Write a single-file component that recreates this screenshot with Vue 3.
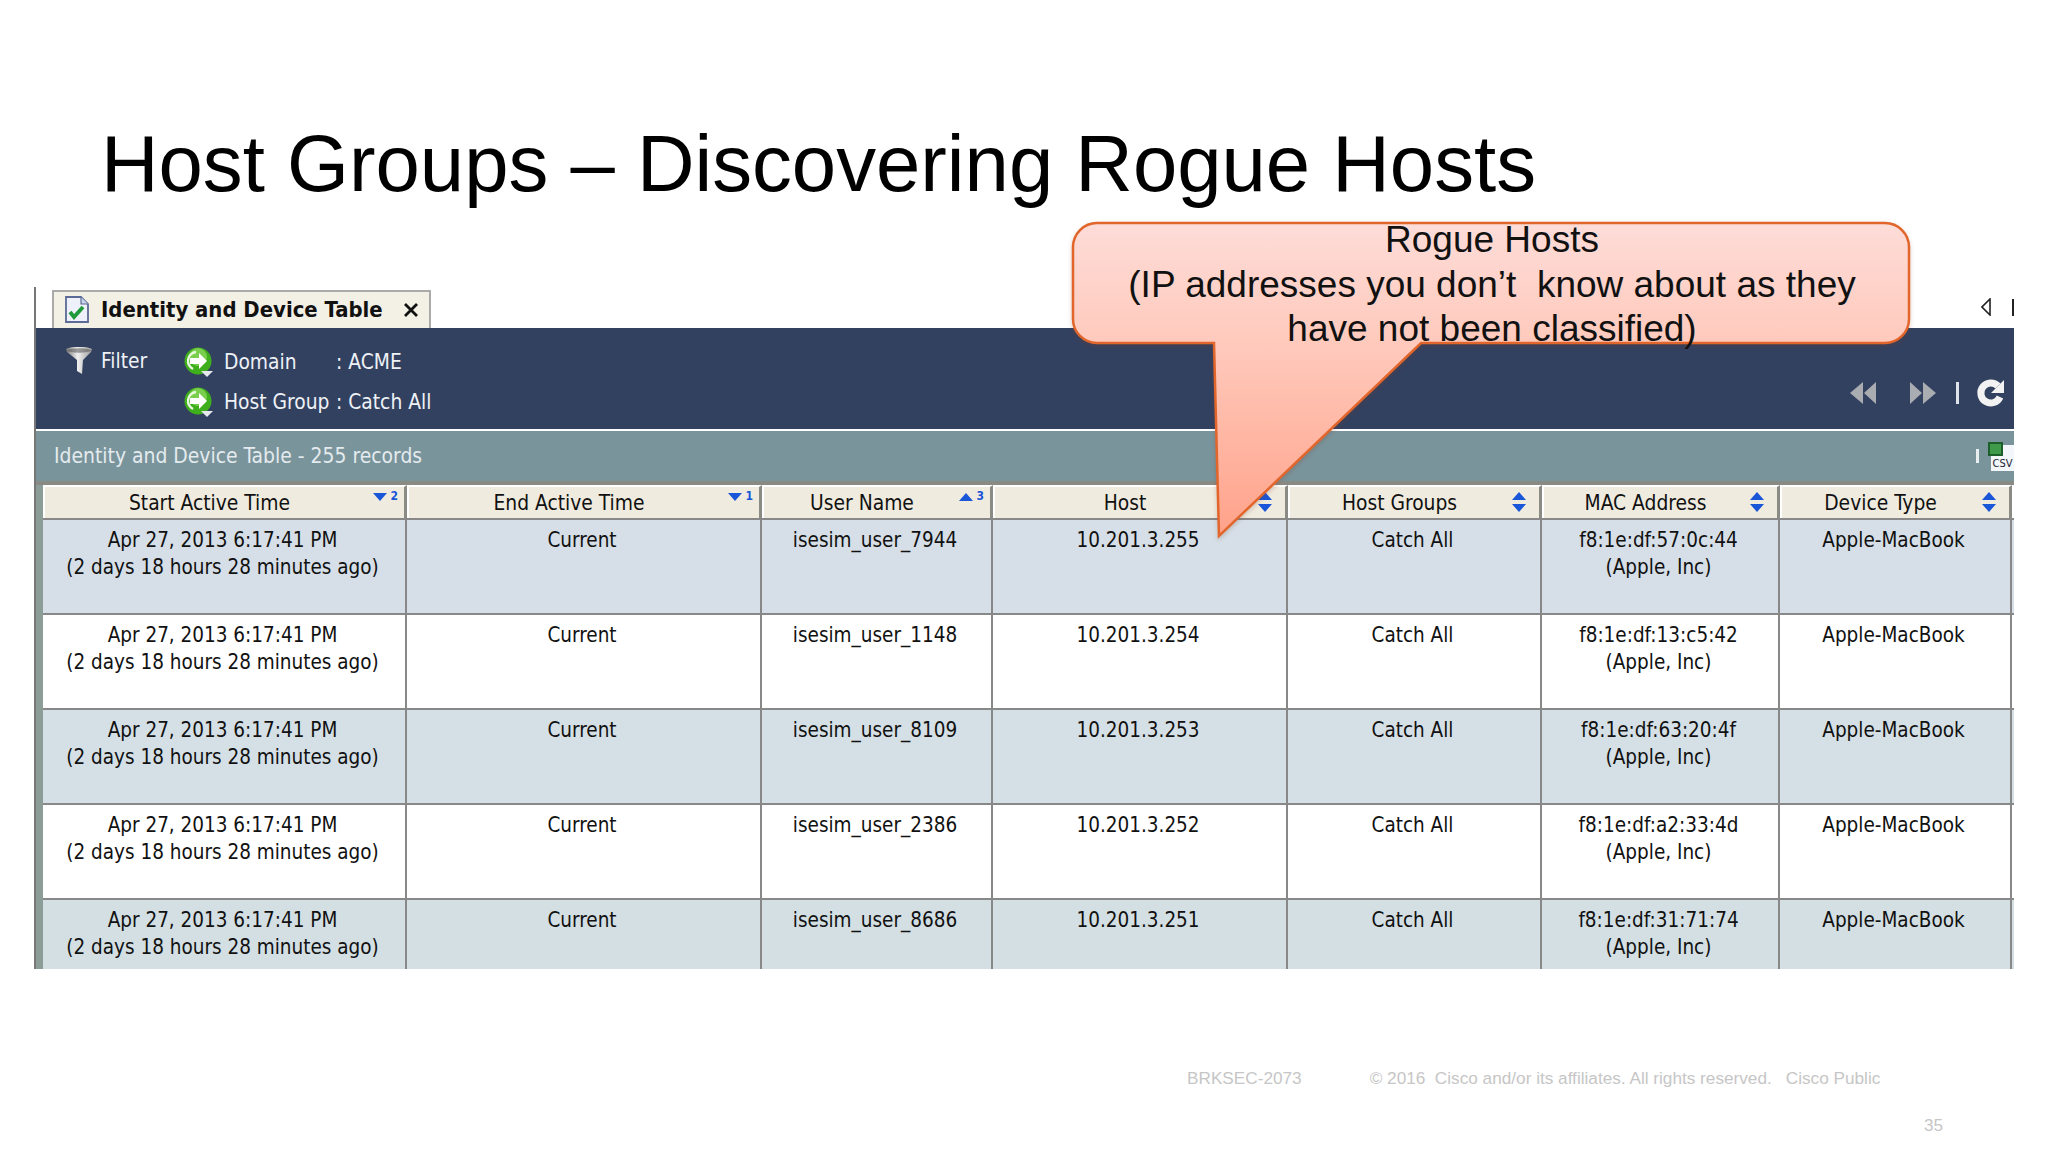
<script setup>
const columns = [
  { label: 'Start Active Time', sort: 'down', rank: '2' },
  { label: 'End Active Time', sort: 'down', rank: '1' },
  { label: 'User Name', sort: 'up', rank: '3' },
  { label: 'Host', sort: 'both' },
  { label: 'Host Groups', sort: 'both' },
  { label: 'MAC Address', sort: 'both' },
  { label: 'Device Type', sort: 'both' }
]
const rows = [
  ['isesim_user_7944', '10.201.3.255', 'f8:1e:df:57:0c:44'],
  ['isesim_user_1148', '10.201.3.254', 'f8:1e:df:13:c5:42'],
  ['isesim_user_8109', '10.201.3.253', 'f8:1e:df:63:20:4f'],
  ['isesim_user_2386', '10.201.3.252', 'f8:1e:df:a2:33:4d'],
  ['isesim_user_8686', '10.201.3.251', 'f8:1e:df:31:71:74']
]
</script>

<template>
  <div class="slide">
    <h1 class="title">Host Groups – Discovering Rogue Hosts</h1>

    <section class="panel">
      <div class="tabbar">
        <div class="tab">
          <svg class="doc" viewBox="0 0 26 28" width="26" height="28">
            <path d="M2 1h15l7 7v18H2z" fill="#eef1fa" stroke="#5b6a96" stroke-width="1.8"/>
            <path d="M17 1v7h7" fill="#c9d3ea" stroke="#5b6a96" stroke-width="1.2"/>
            <path d="M6 16l4 5 9-10" fill="none" stroke="#1f9a3a" stroke-width="3.8"/>
          </svg>
          <span class="tab-title">Identity and Device Table</span>
          <svg class="close" viewBox="0 0 16 14" width="16" height="14">
            <path d="M2 1l12 12M14 1L2 13" stroke="#111" stroke-width="2.8" fill="none"/>
          </svg>
        </div>
        <div class="tab-nav">
          <svg viewBox="0 0 10 18" width="10" height="18"><path d="M9 1v16L1 9z" fill="#fff" stroke="#222" stroke-width="1.6"/></svg>
          <span class="tab-nav-bar"></span>
        </div>
      </div>

      <div class="filterbar">
        <div class="filter-label">
          <svg viewBox="0 0 28 28" width="28" height="28">
            <defs>
              <linearGradient id="fun" x1="0" x2="1" y1="0" y2="0">
                <stop offset="0" stop-color="#777"/><stop offset=".45" stop-color="#f0f0f0"/><stop offset="1" stop-color="#999"/>
              </linearGradient>
            </defs>
            <path d="M1 2c6-3 20-3 26 0l-1 3-8 8-1 14-5-3V13L2 5z" fill="url(#fun)"/>
            <ellipse cx="14" cy="3.5" rx="12" ry="2.2" fill="#555" opacity=".55"/>
          </svg>
          <span>Filter</span>
        </div>
        <div class="filter-grid">
          <svg class="go" viewBox="0 0 30 30" width="30" height="30">
            <circle cx="14" cy="14" r="13.5" fill="#3fae1d"/>
            <circle cx="14" cy="10" r="9" fill="#9be06a" opacity=".65"/>
            <path d="M12 5a9 9 0 0 0-3 17" fill="none" stroke="#e9f7df" stroke-width="2.4"/>
            <path d="M6 11h9V6l8 8-8 8v-5H6z" fill="#fff"/>
            <path d="M17 24h12l-6 6z" fill="#e6e8ee"/>
          </svg>
          <span>Domain</span><span class="colon">: ACME</span>
          <svg class="go" viewBox="0 0 30 30" width="30" height="30">
            <circle cx="14" cy="14" r="13.5" fill="#3fae1d"/>
            <circle cx="14" cy="10" r="9" fill="#9be06a" opacity=".65"/>
            <path d="M12 5a9 9 0 0 0-3 17" fill="none" stroke="#e9f7df" stroke-width="2.4"/>
            <path d="M6 11h9V6l8 8-8 8v-5H6z" fill="#fff"/>
            <path d="M17 24h12l-6 6z" fill="#e6e8ee"/>
          </svg>
          <span>Host Group</span><span class="colon">: Catch All</span>
        </div>
        <div class="pager">
          <svg viewBox="0 0 26 22" width="26" height="22"><path d="M13 0v22L0 11zM26 0v22L14 11z" fill="#a9acb0"/></svg>
          <svg class="next" viewBox="0 0 26 22" width="26" height="22"><path d="M0 0v22l12-11zM13 0v22l13-11z" fill="#a9acb0"/></svg>
          <span class="pager-bar"></span>
          <svg viewBox="0 0 30 30" width="30" height="30">
            <path d="M24 19a10 10 0 1 1-2-11" fill="none" stroke="#f2f2f2" stroke-width="7"/>
            <path d="M28 2v13H15z" fill="#f2f2f2"/>
          </svg>
        </div>
      </div>

      <div class="caption">
        <span>Identity and Device Table - 255 records</span>
        <div class="csv">
          <span class="csv-bar"></span>
          <div class="csv-icon">
            <span class="csv-page"></span>
            <span class="csv-sheet"></span>
            <span class="csv-text">CSV</span>
          </div>
        </div>
      </div>

      <div class="table">
        <div class="head row-grid">
          <div v-for="c in columns" :key="c.label" class="th">
            <span class="th-label">{{ c.label }}</span>
            <span class="sort">
              <svg v-if="c.sort === 'both'" viewBox="0 0 16 20" width="16" height="20">
                <path d="M8 0l7 8H1zM8 20l7-8H1z" fill="#1a56d8"/>
              </svg>
              <template v-else>
                <svg viewBox="0 0 14 8" width="14" height="8">
                  <path v-if="c.sort === 'down'" d="M0 0h14L7 8z" fill="#1a56d8"/>
                  <path v-else d="M0 8h14L7 0z" fill="#1a56d8"/>
                </svg>
                <span class="rank">{{ c.rank }}</span>
              </template>
            </span>
          </div>
        </div>
        <div v-for="r in rows" :key="r[0]" class="row row-grid">
          <div class="td">Apr 27, 2013 6:17:41 PM<br>(2 days 18 hours 28 minutes ago)</div>
          <div class="td">Current</div>
          <div class="td">{{ r[0] }}</div>
          <div class="td">{{ r[1] }}</div>
          <div class="td">Catch All</div>
          <div class="td">{{ r[2] }}<br>(Apple, Inc)</div>
          <div class="td">Apple-MacBook</div>
        </div>
      </div>
    </section>

    <footer class="footer">
      <span class="brk">BRKSEC-2073</span>
      <span class="copy">© 2016&nbsp; Cisco and/or its affiliates. All rights reserved.</span>
      <span class="pub">Cisco Public</span>
    </footer>
    <div class="pageno">35</div>

    <div class="callout">
      <svg class="callout-shape" viewBox="0 0 860 340" width="860" height="340">
        <defs>
          <linearGradient id="cg" gradientUnits="userSpaceOnUse" x1="0" x2="0" y1="8" y2="320">
            <stop offset="0" stop-color="#fddcd8"/>
            <stop offset=".4" stop-color="#ffc9bb"/>
            <stop offset="1" stop-color="#ffa28a"/>
          </linearGradient>
        </defs>
        <path d="M34 8H822a24 24 0 0 1 24 24V104a24 24 0 0 1-24 24H358L156 321 151 128H34a24 24 0 0 1-24-24V32A24 24 0 0 1 34 8z"
              fill="url(#cg)" stroke="#e2662c" stroke-width="2.5"/>
      </svg>
      <p class="callout-text">Rogue Hosts<br>(IP addresses you don’t&nbsp; know about as they<br>have not been classified)</p>
    </div>
  </div>
</template>

<style>
html, body { margin: 0; background: #fff; }
</style>

<style scoped>
.slide {
  position: relative;
  width: 2048px;
  height: 1152px;
  overflow: hidden;
  background: #fff;
  font-family: "Liberation Sans", Arial, sans-serif;
}
.title {
  margin: 0;
  height: 287px;
  box-sizing: border-box;
  padding: 119px 0 0 101px;
  font-size: 79.7px;
  line-height: 90px;
  font-weight: 400;
  color: #000;
  white-space: nowrap;
}
.panel {
  width: 1980px;
  height: 682px;
  margin-left: 34px;
  box-sizing: border-box;
  border-left: 2px solid #777;
  overflow: hidden;
  font-family: "DejaVu Sans", Tahoma, sans-serif;
  font-stretch: condensed;
  font-size: 20.8px;
}
.tabbar {
  height: 41px;
  display: flex;
  justify-content: space-between;
  padding-left: 16px;
  padding-top: 3px;
  box-sizing: border-box;
}
.tab {
  width: 379px;
  height: 38px;
  box-sizing: border-box;
  border: 2px solid #aaa;
  border-bottom: 0;
  background: #f3f0e6;
  display: flex;
  align-items: center;
  padding-left: 10px;
}
.tab-title {
  margin: -2px 0 0 11px;
  font-weight: 700;
  font-size: 21.9px;
  color: #111;
  white-space: nowrap;
  flex: 1;
}
.close { margin-right: 10px; }
.tab-nav {
  display: flex;
  align-items: center;
  gap: 21px;
  padding-bottom: 4px;
}
.tab-nav-bar { width: 2px; height: 17px; background: #222; }
.filterbar {
  height: 101px;
  background: #334160;
  color: #eef1f6;
  display: flex;
  box-sizing: border-box;
  padding: 19px 8px 0 29px;
}
.filter-label {
  width: 119px;
  height: 28px;
  display: flex;
  align-items: center;
  gap: 8px;
}
.filter-grid {
  display: grid;
  grid-template-columns: 40px 112px auto;
  grid-auto-rows: 40px;
  align-items: center;
  align-content: start;
  margin-top: -5px;
  white-space: nowrap;
}
.pager {
  margin-left: auto;
  display: flex;
  align-items: center;
  height: 44px;
  margin-top: 24px;
}
.next { margin-left: 34px; }
.pager-bar { width: 3px; height: 22px; background: #dfe3ea; margin: 0 17px 0 20px; }
.caption {
  height: 50px;
  margin-top: 2px;
  padding: 0 0 0 18px;
  box-sizing: border-box;
  background: #7a949c;
  color: #e4ebee;
  display: flex;
  align-items: center;
  justify-content: space-between;
}
.caption > span { font-size: 20.9px; }
.csv { display: flex; align-items: center; gap: 9px; }
.csv-bar { width: 3px; height: 14px; background: #e8eef0; }
.csv-icon {
  position: relative;
  width: 26px;
  height: 29px;
}
.csv-page {
  position: absolute;
  left: 15px;
  top: 3px;
  width: 11px;
  height: 11px;
  background: #f3f6fb;
}
.csv-sheet {
  position: absolute;
  left: 0;
  top: 0;
  width: 15px;
  height: 14px;
  background: #3f9a4a;
  border: 2px solid #1d5f2b;
  box-sizing: border-box;
}
.csv-text {
  position: absolute;
  left: 3px;
  top: 14px;
  width: 23px;
  height: 15px;
  background: #f3f6fb;
  color: #223;
  font-size: 11px;
  line-height: 15px;
  text-align: center;
}
.table {
  background: #8c9c97;
  padding-left: 7px;
  border-top: 4px solid #8a8a84;
}
.row-grid {
  display: grid;
  grid-template-columns: 364px 355px 231px 295px 254px 238px 232px;
}
.head {
  height: 33px;
  background: #fff;
}
.th {
  position: relative;
  box-sizing: border-box;
  height: 33px;
  margin-left: 2px;
  background: #efebdf;
  border-top: 2px solid #fff;
  border-right: 3px solid #8b8b85;
  text-align: center;
  padding-right: 30px;
  line-height: 32px;
  color: #111;
  white-space: nowrap;
}
.sort {
  position: absolute;
  right: 6px;
  top: 5px;
  display: flex;
  align-items: flex-start;
  gap: 3px;
}
.th:nth-child(-n+3) .sort { top: 6px; }
.th:nth-child(n+4) .sort { right: 12px; }
.rank {
  font-size: 12px;
  line-height: 12px;
  font-weight: 700;
  color: #1a56d8;
  margin-top: -3px;
}
.row {
  height: 95px;
  border-top: 2px solid #888;
  box-sizing: border-box;
  background: #d6dfe7;
  font-size: 20.5px;
}
.row:nth-child(even) { background: #d6dfe7; }
.row:nth-child(odd) { background: #fff; }
.row:nth-child(4) { background: #d5e0e6; }
.row:last-child { background: #d3dfe3; }
.td {
  box-sizing: border-box;
  border-right: 2px solid #888;
  padding: 7px 3px 0 0;
  text-align: center;
  line-height: 27px;
  color: #111;
  white-space: nowrap;
}
.footer {
  display: flex;
  padding: 98px 0 0 1187px;
  font-size: 17.2px;
  line-height: 22px;
  color: #c6c6c6;
  white-space: pre;
}
.copy { margin-left: 68px; }
.pub { margin-left: 14px; }
.pageno {
  position: absolute;
  left: 1924px;
  top: 1114px;
  font-size: 17.2px;
  line-height: 22px;
  color: #c6c6c6;
}
.callout {
  position: absolute;
  left: 1063px;
  top: 215px;
  width: 860px;
  height: 340px;
}
.callout-shape {
  position: absolute;
  left: 0;
  top: 0;
  filter: drop-shadow(0 2px 2px rgba(120, 60, 30, .25));
}
.callout-text {
  position: relative;
  margin: 0;
  padding: 3px 2px 0 0;
  text-align: center;
  font-size: 37px;
  line-height: 44.5px;
  color: #111;
  white-space: pre;
}
</style>
